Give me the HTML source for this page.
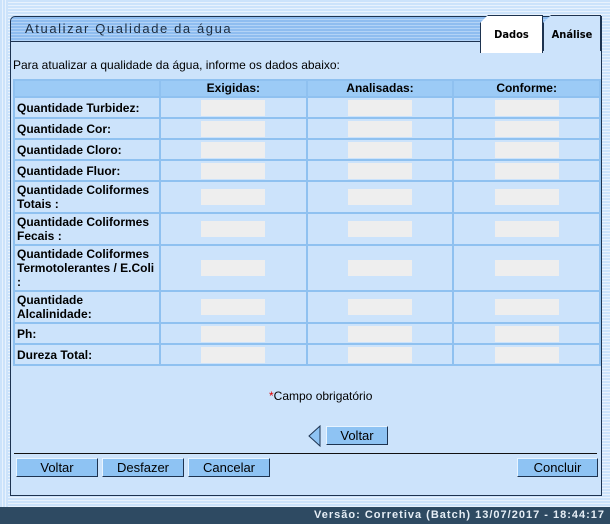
<!DOCTYPE html>
<html><head><meta charset="utf-8"><style>
body{margin:0;width:610px;height:524px;background:#cce3fb;font-family:"Liberation Sans",Arial,sans-serif;font-size:12px;color:#000;position:relative;overflow:hidden}
.ab{position:absolute}
.stripe{background:repeating-linear-gradient(#cce3fb 0 2px,#e8f2fd 2px 3px)}
.title{left:10px;top:16px;width:590px;height:24px;border:1px solid #1d3350;border-bottom:1px solid #1d3350;border-top-left-radius:5px;background:repeating-linear-gradient(#8fbdf0 0 2px,#b3d3f6 2px 3px)}
.title span{position:absolute;left:14px;top:4px;font-size:13px;letter-spacing:1.6px;color:#1d2d40}
.panel{left:10px;top:40px;width:590px;height:455px;border:1px solid #1d3350;border-top:none;background:#cce3fb}
.tab{top:15px;height:36px;border:1px solid #1d3350;border-bottom:none;font-family:"DejaVu Sans Condensed","Liberation Sans Narrow","Liberation Sans",sans-serif;font-weight:bold;font-size:11px;text-align:center;line-height:38px;clip-path:polygon(8px 0,100% 0,100% 100%,0 100%,0 8px)}
table{position:absolute;left:13px;top:79px;border-collapse:separate;border-spacing:2px;background:#8fc1f0;width:588px}
td{background:#cce3fb;padding:0 2px;font-weight:bold;font-size:12px;line-height:14px;vertical-align:middle}
th{background:#9ccbf6;font-size:12px;height:15px;padding:0;line-height:15px}
.in{width:64px;height:16px;background:#eeeeee;margin:0 auto}
.btn{position:absolute;height:17px;background:#8ec3f3;border:1px solid #1d3350;border-top-color:#e8f4ff;border-left-color:#e8f4ff;font-size:13px;text-align:center;line-height:17px}
</style></head><body>
<div class="ab stripe" style="left:0;top:0;width:610px;height:507px"></div>
<div class="ab stripe" style="left:0;top:0;width:8px;height:507px;background:repeating-linear-gradient(90deg,#cce3fb 0 2px,#e8f2fd 2px 3px)"></div>
<div class="ab panel"></div>
<div class="ab title"><span>Atualizar Qualidade da água</span></div>
<div class="ab tab" style="left:480px;width:61px;background:#fff;height:37px">Dados</div>
<div class="ab tab" style="left:543px;width:56px;background:#cce3fb;height:35px">Análise</div>
<div class="ab" style="left:13px;top:58px">Para atualizar a qualidade da água, informe os dados abaixo:</div>
<table>
<tr><th style="width:144px"></th><th>Exigidas:</th><th>Analisadas:</th><th>Conforme:</th></tr>
<tr style="height:19px"><td>Quantidade Turbidez:</td><td><div class="in"></div></td><td><div class="in"></div></td><td><div class="in"></div></td></tr>
<tr style="height:19px"><td>Quantidade Cor:</td><td><div class="in"></div></td><td><div class="in"></div></td><td><div class="in"></div></td></tr>
<tr style="height:19px"><td>Quantidade Cloro:</td><td><div class="in"></div></td><td><div class="in"></div></td><td><div class="in"></div></td></tr>
<tr style="height:19px"><td>Quantidade Fluor:</td><td><div class="in"></div></td><td><div class="in"></div></td><td><div class="in"></div></td></tr>
<tr style="height:30px"><td>Quantidade Coliformes Totais :</td><td><div class="in"></div></td><td><div class="in"></div></td><td><div class="in"></div></td></tr>
<tr style="height:30px"><td>Quantidade Coliformes Fecais :</td><td><div class="in"></div></td><td><div class="in"></div></td><td><div class="in"></div></td></tr>
<tr style="height:44px"><td>Quantidade Coliformes Termotolerantes / E.Coli :</td><td><div class="in"></div></td><td><div class="in"></div></td><td><div class="in"></div></td></tr>
<tr style="height:30px"><td>Quantidade Alcalinidade:</td><td><div class="in"></div></td><td><div class="in"></div></td><td><div class="in"></div></td></tr>
<tr style="height:19px"><td>Ph:</td><td><div class="in"></div></td><td><div class="in"></div></td><td><div class="in"></div></td></tr>
<tr style="height:19px"><td>Dureza Total:</td><td><div class="in"></div></td><td><div class="in"></div></td><td><div class="in"></div></td></tr>
</table>
<div class="ab" style="left:269px;top:389px"><span style="color:#d00">*</span>Campo obrigatório</div>
<svg class="ab" style="left:308px;top:425px" width="14" height="22"><polygon points="12,1 1,11 12,21" fill="#8ec3f3" stroke="#1d3350"/></svg>
<div class="btn" style="left:326px;top:426px;width:60px">Voltar</div>
<div class="ab" style="left:14px;top:453px;width:583px;height:1px;background:#111"></div>
<div class="btn" style="left:16px;top:458px;width:80px">Voltar</div>
<div class="btn" style="left:102px;top:458px;width:80px">Desfazer</div>
<div class="btn" style="left:188px;top:458px;width:80px">Cancelar</div>
<div class="btn" style="left:517px;top:458px;width:79px">Concluir</div>
<div class="ab" style="left:0;top:507px;width:610px;height:17px;background:#2e4a62;color:#e6eef6;font-weight:bold;font-size:11px;letter-spacing:1px;text-align:right;line-height:17px"><span style="padding-right:5px">Versão: Corretiva (Batch) 13/07/2017 - 18:44:17</span></div>
</body></html>
